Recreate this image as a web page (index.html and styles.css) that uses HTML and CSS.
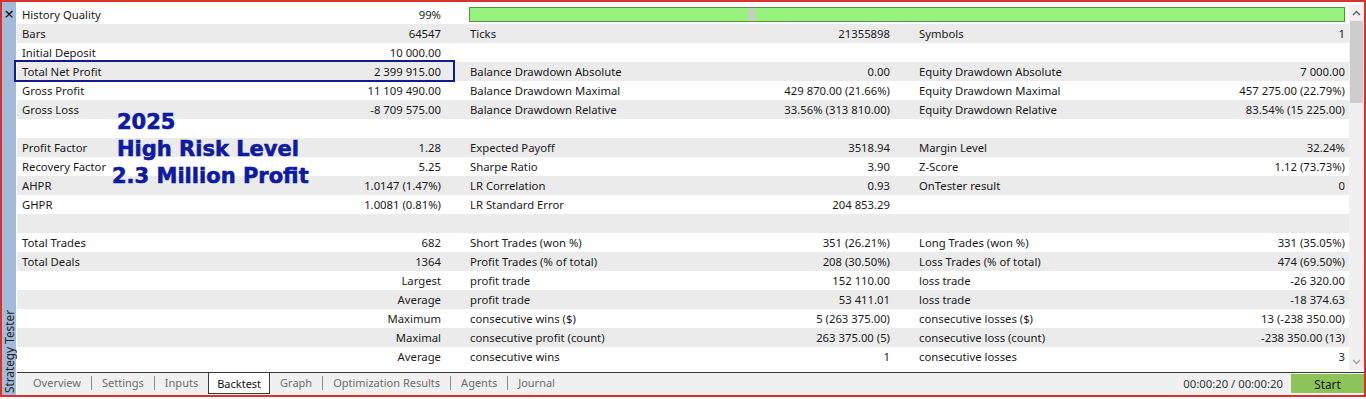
FILE: index.html
```html
<!DOCTYPE html>
<html lang="en">
<head>
    <meta charset="UTF-8">
    <meta name="viewport" content="width=device-width, initial-scale=1.0">
    <title>Strategy Tester - Backtest</title>
    <link rel="stylesheet" href="styles.css">
</head>
<body>
    <div class="window">
        <aside class="side">
            <span class="close">&#215;</span>
            <span class="side-title">Strategy Tester</span>
        </aside>

        <main class="main">
            <div class="report">
                <div class="table">
                    <div class="row">
                        <div class="cell"><span>History Quality</span><span>99%</span></div>
                        <div class="cell cell-wide"><div class="quality"></div></div>
                    </div>
                    <div class="row">
                        <div class="cell"><span>Bars</span><span>64547</span></div>
                        <div class="cell"><span>Ticks</span><span>21355898</span></div>
                        <div class="cell"><span>Symbols</span><span>1</span></div>
                    </div>
                    <div class="row">
                        <div class="cell"><span>Initial Deposit</span><span>10 000.00</span></div>
                        <div class="cell"></div>
                        <div class="cell"></div>
                    </div>
                    <div class="row">
                        <div class="cell"><span>Total Net Profit</span><span>2 399 915.00</span></div>
                        <div class="cell"><span>Balance Drawdown Absolute</span><span>0.00</span></div>
                        <div class="cell"><span>Equity Drawdown Absolute</span><span>7 000.00</span></div>
                    </div>
                    <div class="row">
                        <div class="cell"><span>Gross Profit</span><span>11 109 490.00</span></div>
                        <div class="cell"><span>Balance Drawdown Maximal</span><span>429 870.00 (21.66%)</span></div>
                        <div class="cell"><span>Equity Drawdown Maximal</span><span>457 275.00 (22.79%)</span></div>
                    </div>
                    <div class="row">
                        <div class="cell"><span>Gross Loss</span><span>-8 709 575.00</span></div>
                        <div class="cell"><span>Balance Drawdown Relative</span><span>33.56% (313 810.00)</span></div>
                        <div class="cell"><span>Equity Drawdown Relative</span><span>83.54% (15 225.00)</span></div>
                    </div>
                    <div class="row"></div>
                    <div class="row">
                        <div class="cell"><span>Profit Factor</span><span>1.28</span></div>
                        <div class="cell"><span>Expected Payoff</span><span>3518.94</span></div>
                        <div class="cell"><span>Margin Level</span><span>32.24%</span></div>
                    </div>
                    <div class="row">
                        <div class="cell"><span>Recovery Factor</span><span>5.25</span></div>
                        <div class="cell"><span>Sharpe Ratio</span><span>3.90</span></div>
                        <div class="cell"><span>Z-Score</span><span>1.12 (73.73%)</span></div>
                    </div>
                    <div class="row">
                        <div class="cell"><span>AHPR</span><span>1.0147 (1.47%)</span></div>
                        <div class="cell"><span>LR Correlation</span><span>0.93</span></div>
                        <div class="cell"><span>OnTester result</span><span>0</span></div>
                    </div>
                    <div class="row">
                        <div class="cell"><span>GHPR</span><span>1.0081 (0.81%)</span></div>
                        <div class="cell"><span>LR Standard Error</span><span>204 853.29</span></div>
                        <div class="cell"></div>
                    </div>
                    <div class="row"></div>
                    <div class="row">
                        <div class="cell"><span>Total Trades</span><span>682</span></div>
                        <div class="cell"><span>Short Trades (won %)</span><span>351 (26.21%)</span></div>
                        <div class="cell"><span>Long Trades (won %)</span><span>331 (35.05%)</span></div>
                    </div>
                    <div class="row">
                        <div class="cell"><span>Total Deals</span><span>1364</span></div>
                        <div class="cell"><span>Profit Trades (% of total)</span><span>208 (30.50%)</span></div>
                        <div class="cell"><span>Loss Trades (% of total)</span><span>474 (69.50%)</span></div>
                    </div>
                    <div class="row">
                        <div class="cell"><span></span><span>Largest</span></div>
                        <div class="cell"><span>profit trade</span><span>152 110.00</span></div>
                        <div class="cell"><span>loss trade</span><span>-26 320.00</span></div>
                    </div>
                    <div class="row">
                        <div class="cell"><span></span><span>Average</span></div>
                        <div class="cell"><span>profit trade</span><span>53 411.01</span></div>
                        <div class="cell"><span>loss trade</span><span>-18 374.63</span></div>
                    </div>
                    <div class="row">
                        <div class="cell"><span></span><span>Maximum</span></div>
                        <div class="cell"><span>consecutive wins ($)</span><span>5 (263 375.00)</span></div>
                        <div class="cell"><span>consecutive losses ($)</span><span>13 (-238 350.00)</span></div>
                    </div>
                    <div class="row">
                        <div class="cell"><span></span><span>Maximal</span></div>
                        <div class="cell"><span>consecutive profit (count)</span><span>263 375.00 (5)</span></div>
                        <div class="cell"><span>consecutive loss (count)</span><span>-238 350.00 (13)</span></div>
                    </div>
                    <div class="row">
                        <div class="cell"><span></span><span>Average</span></div>
                        <div class="cell"><span>consecutive wins</span><span>1</span></div>
                        <div class="cell"><span>consecutive losses</span><span>3</span></div>
                    </div>
                </div>

                <div class="scrollbar">
                    <svg class="arrow" width="9" height="6" viewBox="0 0 9 6"><polyline points="1,5 4.5,1.5 8,5" fill="none" stroke="#606060" stroke-width="1.4"/></svg>
                    <div class="track"><div class="thumb"></div></div>
                    <svg class="arrow" width="9" height="6" viewBox="0 0 9 6"><polyline points="1,1 4.5,4.5 8,1" fill="none" stroke="#a0a0a0" stroke-width="1.4"/></svg>
                </div>
            </div>

            <div class="tabs">
                <span class="tab">Overview</span>
                <span class="sep"></span>
                <span class="tab">Settings</span>
                <span class="sep"></span>
                <span class="tab">Inputs</span>
                <span class="tab tab-active">Backtest</span>
                <span class="tab">Graph</span>
                <span class="sep"></span>
                <span class="tab">Optimization Results</span>
                <span class="sep"></span>
                <span class="tab">Agents</span>
                <span class="sep"></span>
                <span class="tab">Journal</span>

                <span class="timer">00:00:20 / 00:00:20</span>
                <button class="start">Start</button>
            </div>
        </main>

        <!-- annotations drawn on top of the report -->
        <div class="mark"></div>
        <div class="caption">
            <div>2025</div>
            <div>High Risk Level</div>
            <div class="caption-last">2.3 Million Profit</div>
        </div>
    </div>
</body>
</html>
```

FILE: styles.css
```css
body {
    margin: 0;
    background-color: #fff;
    font-family: "Segoe UI", "Noto Sans", sans-serif;
    font-size: 11.3px;
    color: #1a1a1a;
}
.window {
    position: relative;
    display: flex;
    width: 1366px;
    height: 397px;
    box-sizing: border-box;
    border: 2px solid #d8322e;
    background-color: #fff;
}
.side {
    width: 14px;
    margin-right: 1px;
    background-color: #a3bad8;
    display: flex;
    flex-direction: column;
    justify-content: space-between;
    align-items: center;
}
.close {
    margin-top: 2px;
    font-size: 17px;
    line-height: 20px;
    color: #111;
}
.side-title {
    writing-mode: vertical-rl;
    transform: rotate(180deg);
    padding-top: 2px;
    color: #222;
    font-size: 11.8px;
    line-height: 14px;
}
.main {
    flex: 1;
    display: flex;
    flex-direction: column;
}
.report {
    flex: 1;
    display: flex;
    padding-top: 3px;
}
.table {
    flex: 1;
}
.row {
    display: grid;
    grid-template-columns: 448px 449px 1fr;
    height: 19px;
    line-height: 19px;
}
.row:nth-child(even) {
    background-color: #ebebeb;
}
.cell {
    display: flex;
    justify-content: space-between;
    padding: 0 24px 0 5px;
    white-space: nowrap;
}
.cell:last-child {
    padding-right: 4px;
}
.cell-wide {
    grid-column: 2 / 4;
    padding: 0 2px 0 4px;
    align-items: center;
}
.quality {
    flex: 1;
    height: 13px;
    border: 1px solid #5b8c4c;
    background: linear-gradient(to right, #97f27e 0 279px, #cbcbcb 279px 285px, #97f27e 285px);
}
.scrollbar {
    width: 15px;
    height: 365px;
    background-color: #f0f0f0;
    display: flex;
    flex-direction: column;
    align-items: center;
}
.arrow {
    margin: 5px 0;
}
.track {
    flex: 1;
    width: 100%;
}
.thumb {
    height: 82px;
    margin: 0 1px;
    background-color: #cdcdcd;
}
.tabs {
    height: 22px;
    border-top: 1px solid #3a3a3a;
    background-color: #f0f0f0;
    display: flex;
    align-items: flex-start;
    padding-left: 6px;
    line-height: 19px;
    font-size: 11px;
}
.tab {
    padding: 0 10px;
    color: #6e6e6e;
}
.sep {
    width: 1px;
    height: 14px;
    margin-top: 3px;
    background-color: #8a8a8a;
}
.tab-active {
    margin: -1px 0 0 0;
    padding: 0 8px;
    height: 20px;
    line-height: 21px;
    border: 1px solid #3a3a3a;
    background-color: #fff;
    color: #111;
}
.timer {
    margin-left: auto;
    margin-right: 8px;
    color: #333;
    line-height: 21px;
    font-size: 11.3px;
}
.start {
    width: 73px;
    height: 19px;
    margin-top: 1px;
    border: none;
    background-color: #8cc45a;
    font-family: inherit;
    font-size: 11.8px;
    color: #1a1a1a;
    padding: 0;
}
.mark {
    position: absolute;
    left: 12px;
    top: 58px;
    width: 437px;
    height: 18px;
    border: 2px solid #141a8c;
}
.caption {
    position: absolute;
    left: 115px;
    top: 107px;
    font-family: "DejaVu Sans", Verdana, sans-serif;
    font-weight: bold;
    font-size: 21px;
    line-height: 27px;
    color: #0e1ba0;
    -webkit-text-stroke: 0.6px #0e1ba0;
}
.caption-last {
    margin-left: -5px;
}
```
